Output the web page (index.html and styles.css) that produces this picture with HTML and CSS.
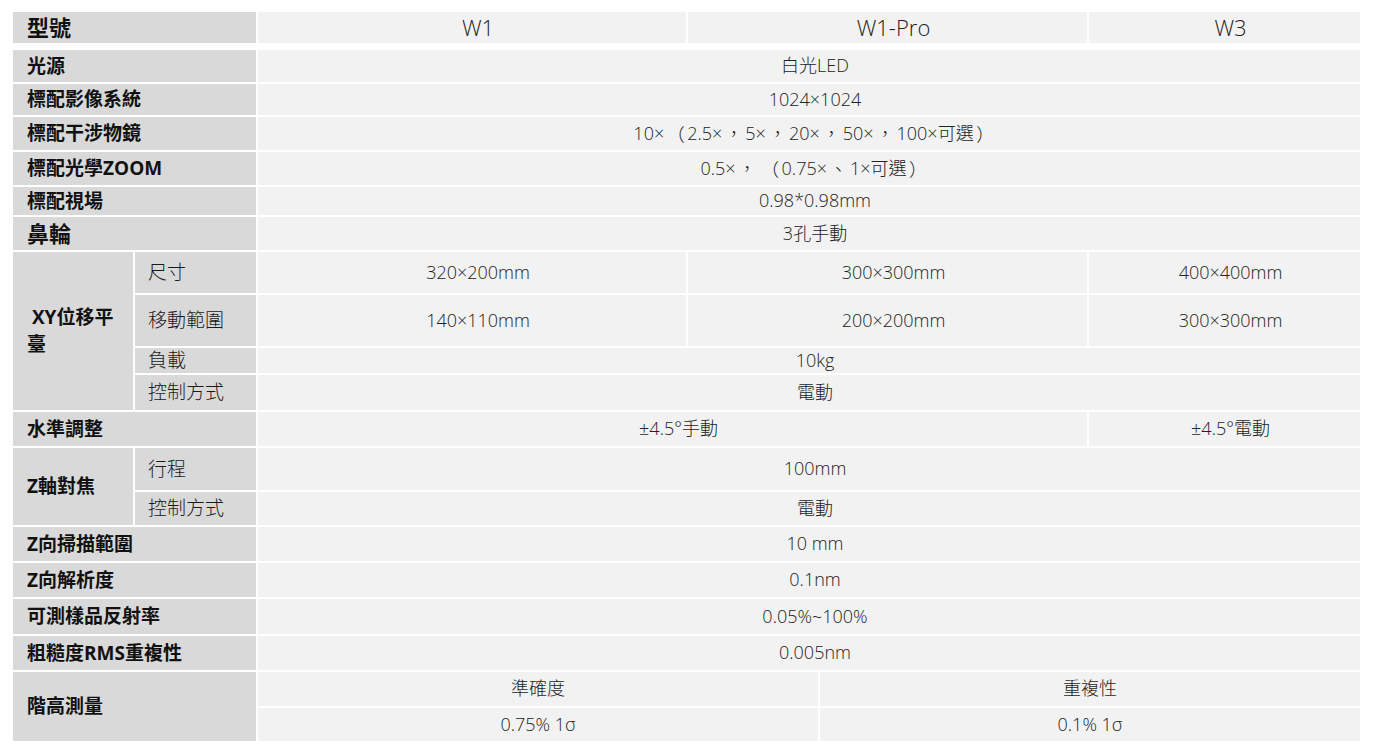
FILE: index.html
```html
<!DOCTYPE html>
<html lang="zh-Hant">
<head>
<meta charset="utf-8">
<title>規格表</title>
<link rel="stylesheet" href="styles.css">
</head>
<body>
<div class="page">
  <div class="spec head">
    <div class="lab lab-big span-lab">型號</div>
    <div class="val val-big c-w1">W1</div>
    <div class="val val-big c-pro">W1-Pro</div>
    <div class="val val-big c-w3">W3</div>
  </div>
  <div class="spec body">
    <div class="lab span-lab r1">光源</div>
    <div class="val c-all r1">白光LED</div>

    <div class="lab span-lab r2">標配影像系統</div>
    <div class="val c-all r2">1024×1024</div>

    <div class="lab span-lab r3">標配干涉物鏡</div>
    <div class="val c-all r3">10×<span class="tc">（</span>2.5×<span class="tc">，</span>5×<span class="tc">，</span>20×<span class="tc">，</span>50×<span class="tc">，</span>100×可選<span class="tc">）</span></div>

    <div class="lab span-lab r4">標配光學ZOOM</div>
    <div class="val c-all r4">0.5×<span class="tc">，</span><span class="tc">（</span>0.75×<span class="tc">、</span>1×可選<span class="tc">）</span></div>

    <div class="lab span-lab r5">標配視場</div>
    <div class="val c-all r5">0.98*0.98mm</div>

    <div class="lab lab-big span-lab r6">鼻輪</div>
    <div class="val c-all r6">3孔手動</div>

    <div class="lab group g-xy">&nbsp;XY位移平<br>臺</div>
    <div class="sub r7">尺寸</div>
    <div class="val c-w1 r7">320×200mm</div>
    <div class="val c-pro r7">300×300mm</div>
    <div class="val c-w3 r7">400×400mm</div>

    <div class="sub r8">移動範圍</div>
    <div class="val c-w1 r8">140×110mm</div>
    <div class="val c-pro r8">200×200mm</div>
    <div class="val c-w3 r8">300×300mm</div>

    <div class="sub r9">負載</div>
    <div class="val c-all r9">10kg</div>

    <div class="sub r10">控制方式</div>
    <div class="val c-all r10">電動</div>

    <div class="lab span-lab r11">水準調整</div>
    <div class="val c-left2 r11">±4.5°手動</div>
    <div class="val c-w3 r11">±4.5°電動</div>

    <div class="lab group g-z">Z軸對焦</div>
    <div class="sub r12">行程</div>
    <div class="val c-all r12">100mm</div>

    <div class="sub r13">控制方式</div>
    <div class="val c-all r13">電動</div>

    <div class="lab span-lab r14">Z向掃描範圍</div>
    <div class="val c-all r14">10 mm</div>

    <div class="lab span-lab r15">Z向解析度</div>
    <div class="val c-all r15">0.1nm</div>

    <div class="lab span-lab r16">可測樣品反射率</div>
    <div class="val c-all r16">0.05%~100%</div>

    <div class="lab span-lab r17">粗糙度RMS重複性</div>
    <div class="val c-all r17">0.005nm</div>

    <div class="lab span-lab g-step">階高測量</div>
    <div class="val even c-half1 r18">準確度</div>
    <div class="val even c-half2 r18">重複性</div>
    <div class="val even c-half1 r19">0.75% 1σ</div>
    <div class="val even c-half2 r19">0.1% 1σ</div>
  </div>
</div>
</body>
</html>
```

FILE: styles.css
```css
html, body {
  margin: 0;
  padding: 0;
  background: #ffffff;
}

.page {
  padding: 12px 0 0 13px;
  width: 1347px;
  font-family: "Open Sans", "Noto Sans CJK TC", sans-serif;
  color: #1a1a1a;
}

.spec {
  display: grid;
  grid-template-columns: 120px 121px 428px 130px 267px 271px;
  column-gap: 2px;
  row-gap: 2px;
}

.head {
  grid-template-rows: 31px;
  margin-bottom: 7px;
}

.body {
  grid-template-rows: 32px 31px 33px 33px 28px 33px 41px 51px 25px 35px 34px 42px 33px 34px 34px 35px 34px 34px 33px;
}

.lab, .sub, .val {
  display: flex;
  align-items: center;
  font-size: 18px;
  line-height: 1.2;
}

.lab {
  background: #d9d9d9;
  padding-left: 14px;
  font-size: 19px;
  font-weight: 700;
  color: #111;
}

.lab-big {
  font-size: 22px;
}

.sub {
  background: #d9d9d9;
  padding-left: 13px;
  grid-column: 2 / 3;
  font-weight: 300;
  font-size: 19px;
}

.val {
  background: #f2f2f2;
  justify-content: center;
  padding-left: 12px;
  font-weight: 300;
  color: #222;
}

.val.even {
  padding-left: 0;
}

.val-big {
  font-size: 22px;
}

.tc {
  font-family: "Noto Sans CJK TC", sans-serif;
  padding: 0 2.5px;
}

.span-lab { grid-column: 1 / 3; }
.c-all { grid-column: 3 / 7; }
.c-w1 { grid-column: 3 / 4; }
.c-pro { grid-column: 4 / 6; }
.c-w3 { grid-column: 6 / 7; }
.c-left2 { grid-column: 3 / 6; }
.c-half1 { grid-column: 3 / 5; }
.c-half2 { grid-column: 5 / 7; }

.group {
  grid-column: 1 / 2;
  line-height: 1.4;
}

.g-xy { grid-row: 7 / 11; }
.g-z { grid-row: 12 / 14; }
.g-step { grid-row: 18 / 20; }

.r1 { grid-row: 1; }
.r2 { grid-row: 2; }
.r3 { grid-row: 3; }
.r4 { grid-row: 4; }
.r5 { grid-row: 5; }
.r6 { grid-row: 6; }
.r7 { grid-row: 7; }
.r8 { grid-row: 8; }
.r9 { grid-row: 9; }
.r10 { grid-row: 10; }
.r11 { grid-row: 11; }
.r12 { grid-row: 12; }
.r13 { grid-row: 13; }
.r14 { grid-row: 14; }
.r15 { grid-row: 15; }
.r16 { grid-row: 16; }
.r17 { grid-row: 17; }
.r18 { grid-row: 18; }
.r19 { grid-row: 19; }
```
